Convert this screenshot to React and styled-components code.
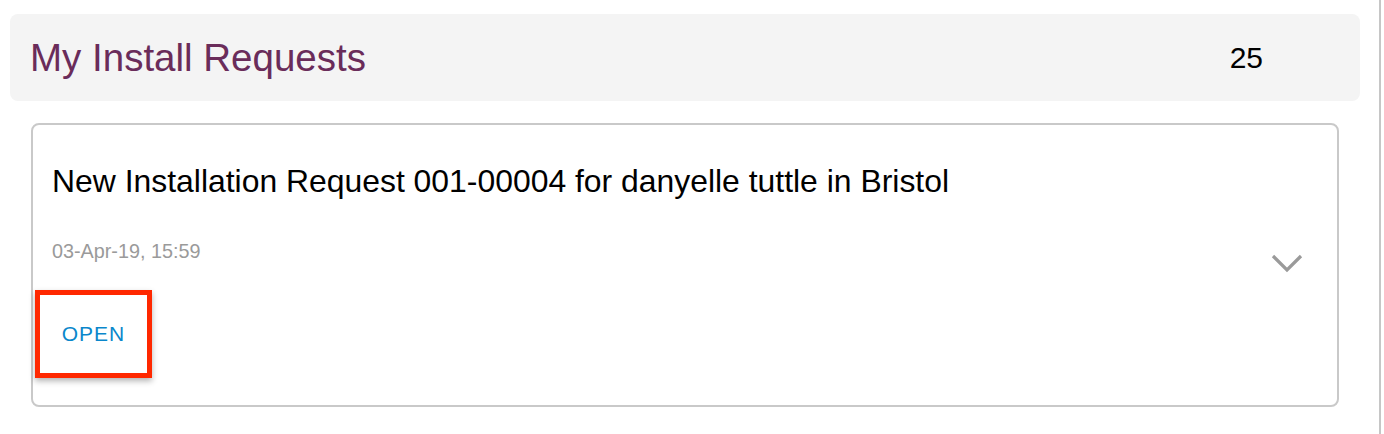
import styled, { createGlobalStyle } from "styled-components";

const GlobalStyle = createGlobalStyle`
    html, body {
        margin: 0;
        padding: 0;
        background: #ffffff;
        font-family: "Liberation Sans", Arial, sans-serif;
    }
`;

const Page = styled.div`
    box-sizing: border-box;
    width: 1381px;
    height: 434px;
    padding: 14px 19px 0 10px;
    border-right: 2px solid #c6c6c6;
`;

const Header = styled.div`
    display: flex;
    height: 87px;
    padding: 0 97px 0 20px;
    background: #f4f4f4;
    border-radius: 8px;
    align-items: center;
    justify-content: space-between;
`;

const Title = styled.h2`
    margin: 0;
    font-size: 38.5px;
    font-weight: 400;
    color: #6a2c5a;
`;

const Count = styled.span`
    font-size: 30px;
    color: #000000;
`;

const Card = styled.div`
    display: flex;
    margin: 22px 21px 0 21px;
    padding: 38px 34px 27px 2px;
    border: 2px solid #c9c9c9;
    border-radius: 8px;
    align-items: center;
    justify-content: space-between;
`;

const Body = styled.div`
    display: flex;
    flex-direction: column;
    align-items: flex-start;
`;

const CardTitle = styled.div`
    padding-left: 17px;
    font-size: 31.9px;
    line-height: 36px;
    color: #000000;
`;

const Stamp = styled.div`
    margin-top: 42px;
    padding-left: 17px;
    font-size: 19.8px;
    line-height: 21px;
    color: #9a9a9a;
`;

const Highlight = styled.div`
    display: flex;
    width: 107px;
    height: 78px;
    margin-top: 28px;
    border: 5px solid #ff2800;
    box-shadow: 0 3px 6px rgba(0, 0, 0, 0.3);
    align-items: center;
    justify-content: center;
`;

const Button = styled.button`
    padding: 0;
    font-family: "Liberation Sans", Arial, sans-serif;
    font-size: 21px;
    letter-spacing: 1px;
    color: #0a87cb;
    background: none;
    border: none;
    cursor: pointer;
`;

const Chevron = styled.svg`
    width: 32px;
    height: 20px;
    margin-bottom: 16px;
`;

const App = () => {
    return (
        <>
            <GlobalStyle />
            <Page>
                <Header>
                    <Title>My Install Requests</Title>
                    <Count>25</Count>
                </Header>
                <Card>
                    <Body>
                        <CardTitle>
                            New Installation Request 001-00004 for danyelle tuttle in Bristol
                        </CardTitle>
                        <Stamp>03-Apr-19, 15:59</Stamp>
                        <Highlight>
                            <Button>OPEN</Button>
                        </Highlight>
                    </Body>
                    <Chevron viewBox="0 0 32 20">
                        <polyline
                            points="2,3 16,17 30,3"
                            fill="none"
                            stroke="#9a9a9a"
                            strokeWidth="3.2"
                        />
                    </Chevron>
                </Card>
            </Page>
        </>
    );
};

export default App;
